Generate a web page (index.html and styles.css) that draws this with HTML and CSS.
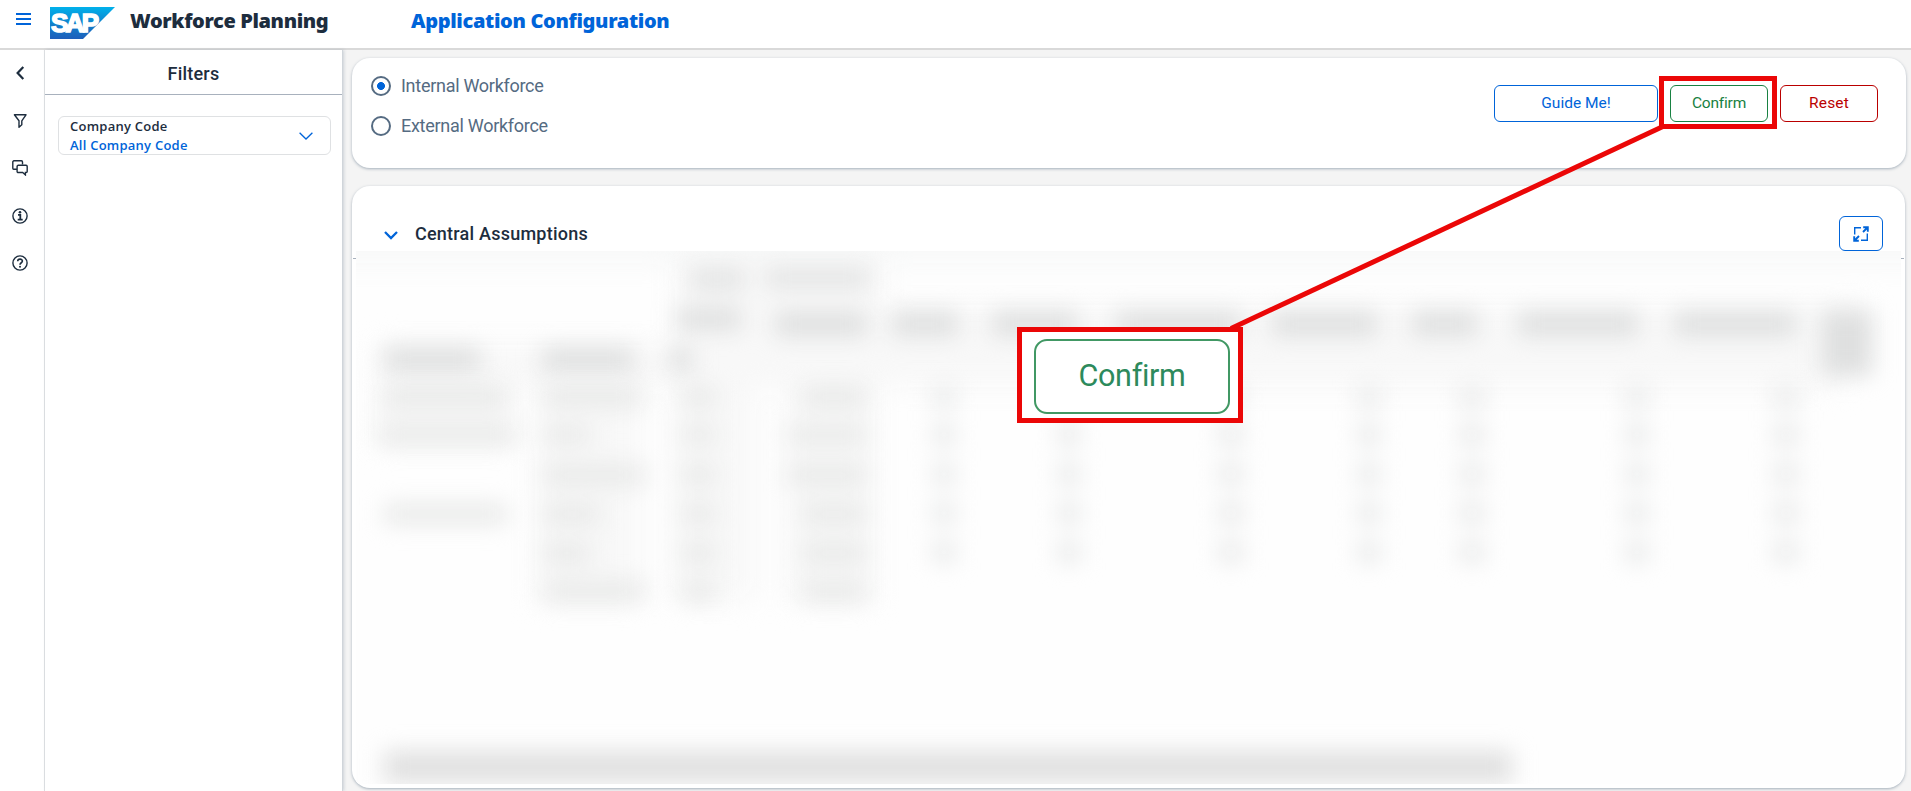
FILE: index.html
```html
<!DOCTYPE html>
<html lang="en">
<head>
<meta charset="utf-8">
<title>Workforce Planning</title>
<link rel="stylesheet" href="styles.css">
</head>
<body>
<header class="topbar">
  <svg class="menu-icon" width="15" height="12" viewBox="0 0 15 12"><path d="M0 1h15M0 6h15M0 11h15" stroke="#0064d9" stroke-width="2"/></svg>
  <svg class="logo" width="65" height="32" viewBox="0 0 65 32">
    <defs><linearGradient id="lg" x1="0" y1="0" x2="0" y2="1"><stop offset="0" stop-color="#00b1eb"/><stop offset=".5" stop-color="#1083cd"/><stop offset="1" stop-color="#1e5fbb"/></linearGradient></defs>
    <path d="M0 0h65L33 32H0z" fill="url(#lg)"/>
    <text class="logo-text" x="1" y="25" textLength="48" lengthAdjust="spacing">SAP</text>
  </svg>
  <h1 class="product"><span>Workforce Planning</span></h1>
  <h2 class="page-name"><span>Application Configuration</span></h2>
</header>
<div class="body">
  <nav class="rail">
    <svg width="16" height="16" viewBox="0 0 16 16"><path d="M11.3 2L5.6 8L11.3 14" fill="none" stroke="#1d2d3e" stroke-width="2.2"/></svg>
    <svg width="16" height="16" viewBox="0 0 16 16"><path d="M2.4 1.8h11.6l-4.2 6v4L7 14.2V7.8z" fill="none" stroke="#1d2d3e" stroke-width="1.4" stroke-linejoin="round"/></svg>
    <svg width="16" height="16" viewBox="0 0 16 16"><path d="M4.8 9.2H4L1.800 9.2H1.700A1 1 0 0 1 .8 8.2V1.9A1.1 1.1 0 0 1 1.9.8h7.5a1.1 1.1 0 0 1 1.1 1.1v2.3M6.200 5.3h7.9a1.1 1.1 0 0 1 1.1 1.1v5a1.1 1.1 0 0 1-1.1 1.1h-.7v2.4l-2.7-2.4H6.200a1.1 1.1 0 0 1-1.1-1.1v-5a1.1 1.1 0 0 1 1.1-1.1z" fill="none" stroke="#1d2d3e" stroke-width="1.4"/></svg>
    <svg width="16" height="16" viewBox="0 0 16 16"><circle cx="8" cy="8" r="7.1" fill="none" stroke="#1d2d3e" stroke-width="1.4"/><path d="M6 6.8h2.3v4.6M5.7 11.6h5" fill="none" stroke="#1d2d3e" stroke-width="1.8"/><circle cx="8" cy="4.2" r="1.3" fill="#1d2d3e"/></svg>
    <svg width="16" height="16" viewBox="0 0 16 16"><circle cx="8" cy="8" r="7.1" fill="none" stroke="#1d2d3e" stroke-width="1.4"/><path d="M5.7 6.2C5.7 3.4 10.4 3.4 10.4 6.1C10.4 7.9 8 7.6 8 9.8" fill="none" stroke="#1d2d3e" stroke-width="1.6"/><circle cx="8" cy="11.8" r="1" fill="#1d2d3e"/></svg>
  </nav>
  <aside class="filters">
    <h3 class="filters-title"><span>Filters</span></h3>
    <div class="select">
      <div class="select-text"><span class="select-label">Company Code</span><span class="select-value">All Company Code</span></div>
      <svg width="14" height="8" viewBox="0 0 14 8"><path d="M.6.7L7 7L13.4.7" fill="none" stroke="#0064d9" stroke-width="1.3"/></svg>
    </div>
  </aside>
  <main class="main">
    <section class="card controls">
      <div class="radios">
        <div class="radio"><i class="dot on"></i><span class="radio-label">Internal Workforce</span></div>
        <div class="radio"><i class="dot"></i><span class="radio-label">External Workforce</span></div>
      </div>
      <div class="actions">
        <button class="btn guide"><span>Guide Me!</span></button>
        <button class="btn confirm"><span>Confirm</span></button>
        <button class="btn reset"><span>Reset</span></button>
      </div>
    </section>
    <section class="card assumptions">
      <div class="section-head">
        <svg width="14" height="9" viewBox="0 0 14 9"><path d="M1 1L7 7L13 1" fill="none" stroke="#0064d9" stroke-width="2.3"/></svg>
        <h3 class="section-title"><span>Central Assumptions</span></h3>
        <button class="expand"><svg width="16" height="16" viewBox="0 0 16 16"><path d="M8 1.7H1.7V8.5M8 14.3h6.3V7.5" fill="none" stroke="#0064d9" stroke-width="1.4"/><path d="M10.2 1.2h4.6v4.6M14.5 1.5L10 6M5.8 14.8H1.2v-4.6M1.5 14.5L6 10" fill="none" stroke="#0064d9" stroke-width="1.9"/></svg></button>
      </div>
      <div class="rule"></div>
      <svg class="obscured" width="1545" height="533" viewBox="356 251 1545 533">
        <defs>
          <filter id="soft" filterUnits="userSpaceOnUse" x="300" y="200" width="1660" height="640" color-interpolation-filters="sRGB"><feGaussianBlur stdDeviation="11"/></filter>
          <filter id="wide" filterUnits="userSpaceOnUse" x="300" y="200" width="1660" height="640" color-interpolation-filters="sRGB"><feGaussianBlur stdDeviation="14"/></filter>
        </defs>
        <path d="M356 251h1545v533H356z" fill="#fefefe"/>
        <g filter="url(#wide)" fill="#f8f8f8">
          <path d="M300 225h1660v38H300z" fill="#f7f8f8"/>
          <path d="M675 258h205v130H675zM380 345h1460v42H380zM375 385h140v60H375zM535 385h105v215H535zM670 385h85v215H670zM785 385h90v215H785zM880 305h980v40H880z"/>
        </g>
        <g filter="url(#soft)" fill="#dedfdf">
          <path d="M690 268h55v22h-55zM765 268h105v20H765z" fill="#e3e4e4"/>
          <path d="M677 308h64v22h-64zM775 312h92v24h-92zM892 312h66v24h-66zM992 312h85v24h-85zM1116 312h125v24h-125zM1272 312h105v24h-105zM1412 312h65v24h-65zM1518 312h120v24h-120zM1674 312h122v24h-122zM1822 310h50v66h-50z"/>
          <path d="M384 348h96v23h-96zM542 348h92v23h-92zM670 348h22v23h-22z"/>
        </g>
        <g filter="url(#soft)" fill="#e8e9e8">
          <path d="M384 387h123v20H384zM380 425h135v19H380zM384 504h123v20H384z"/>
          <path d="M544 387h97v20h-97zM544 426h46v18h-46zM544 465h100v20h-100zM544 504h56v20h-56zM544 543h46v20h-46zM544 581h100v20h-100z"/>
          <path d="M683 387h32v20h-32zM683 426h32v18h-32zM683 465h32v20h-32zM683 504h32v20h-32zM683 543h32v20h-32zM683 581h32v20h-32z"/>
          <path d="M802 387h64v20h-64zM788 426h78v18h-78zM788 465h78v20h-78zM802 504h64v20h-64zM802 543h64v20h-64zM802 581h64v20h-64z"/>
        </g>
        <g filter="url(#soft)" fill="#ebecec">
          <path id="values" d="M932 386h24v22h-24zM1057 386h24v22h-24zM1218 386h26v22h-26zM1357 386h24v22h-24zM1459 386h26v22h-26zM1625 386h24v22h-24zM1773 386h26v22h-26z"/>
          <use href="#values" y="38"/><use href="#values" y="77"/><use href="#values" y="116"/><use href="#values" y="155"/>
        </g>
        <path d="M384 751h1128v32H384z" fill="#e0e0e0" filter="url(#soft)"/>
      </svg>
    </section>
  </main>
</div>
<div class="callout-source"></div>
<svg class="connector" width="1911" height="791"><path d="M1664 126L1231 328.500" stroke="#eb0707" stroke-width="5"/></svg>
<div class="callout"><div class="callout-btn"><span>Confirm</span></div></div>
</body>
</html>
```

FILE: styles.css
```css
* { box-sizing: border-box; }
body { margin: 0; width: 1911px; height: 791px; overflow: hidden; position: relative; background: #f4f4f4; font-family: Roboto, "Liberation Sans", sans-serif; color: #1d2d3e; display: flex; flex-direction: column; }
h1, h2, h3 { margin: 0; white-space: nowrap; }
svg { display: block; flex: none; }
.topbar { height: 50px; flex: none; background: #fff; border-bottom: 2px solid #d9d9d9; display: flex; align-items: flex-start; padding-left: 16px; }
.menu-icon { margin-top: 13px; }
.logo { margin: 7px 0 0 19px; }
.logo-text { font: 700 26px "Liberation Sans", sans-serif; fill: #fff; stroke: #fff; stroke-width: 1.6px; }
.product { margin-left: 15px; width: 281px; font: 900 20px/24px "Noto Sans", sans-serif; padding-top: 9px; letter-spacing: -.38px; }
.page-name { font: 900 20px/24px "Noto Sans", sans-serif; padding-top: 9px; color: #0064d9; letter-spacing: -.34px; }
.body { flex: 1; display: flex; min-height: 0; }
.rail { width: 45px; background: #fff; border-right: 1px solid #e1e3e5; display: flex; flex-direction: column; gap: 31.5px; padding: 15px 0 0 11.5px; }
.filters { width: 298px; background: #fff; border-right: 1px solid #d0d5da; box-shadow: 1px 0 3px rgba(85,107,130,.25); }
.filters-title { height: 45px; border-bottom: 1px solid #a8b1bd; text-align: center; font-size: 18px; line-height: 48px; font-weight: 500; letter-spacing: .2px; }
.select { margin: 21px 0 0 13px; width: 273px; height: 39px; border: 1px solid #dfe1e3; border-radius: 6px; display: flex; align-items: center; justify-content: space-between; padding: 0 17px 0 11px; }
.select-text { display: flex; flex-direction: column; font: 600 13px/19px "Open Sans", sans-serif; letter-spacing: .24px; white-space: nowrap; }
.select-value { color: #0064d9; }
.main { flex: 1; padding: 8px 5px 0 9px; }
.card { background: #fff; border-radius: 18px; box-shadow: 0 1px 3px rgba(85,107,130,.5); }
.controls { height: 110px; display: flex; justify-content: space-between; padding: 18px 28px 0 19px; }
.radios { display: flex; flex-direction: column; gap: 20px; }
.radio { display: flex; align-items: center; gap: 10px; height: 20px; font-size: 18px; letter-spacing: -.28px; color: #556b82; white-space: nowrap; }
.radio-label { line-height: 20px; }
.dot { width: 20px; height: 20px; border: 2px solid #556b82; border-radius: 50%; }
.dot.on { background: radial-gradient(circle, #0064d9 3.6px, #fff 4.3px); }
.actions { display: flex; gap: 12px; padding-top: 9px; }
.btn { width: 98px; height: 37px; border: 1px solid currentColor; border-radius: 6px; background: #fff; font: 400 15.5px/35px Roboto, sans-serif; padding: 0; white-space: nowrap; }
.guide { width: 164px; color: #0064d9; }
.confirm { color: #188142; letter-spacing: -.2px; }
.reset { color: #ba0000; letter-spacing: .2px; }
.assumptions { margin-top: 18px; width: 1553px; height: 602px; overflow: hidden; }
.section-head { height: 65px; display: flex; align-items: flex-start; padding: 30px 22px 0 32px; }
.section-head > svg { margin-top: 15px; }
.section-title { margin-left: 17px; flex: 1; font-size: 18px; line-height: 36px; font-weight: 500; letter-spacing: .23px; }
.expand { width: 44px; height: 35px; border: 1px solid #0064d9; border-radius: 6px; background: #fff; padding: 0; display: flex; align-items: center; justify-content: center; }
.rule { height: 1px; background: #a8b1bd; margin: 7px 1px -8px 1px; }
.obscured { margin-left: 4px; position: relative; }
.callout-source { position: absolute; left: 1659px; top: 76px; width: 118px; height: 53px; border: 5px solid #eb0707; }
.connector { position: absolute; left: 0; top: 0; }
.callout { position: absolute; left: 1017px; top: 327px; width: 226px; height: 96px; border: 5px solid #eb0707; background: #fff; padding: 7px 0 0 12px; }
.callout-btn { width: 196px; height: 75px; border: 2px solid #419864; border-radius: 13px; text-align: center; font-size: 30.5px; letter-spacing: -.3px; line-height: 70px; color: #2d8a5c; }
```
